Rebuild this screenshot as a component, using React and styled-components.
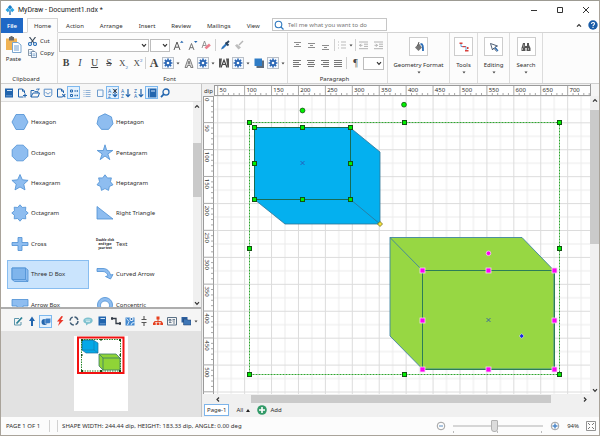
import React, { useState } from "react";
import styled, { createGlobalStyle } from "styled-components";

const GlobalStyle = createGlobalStyle`
  * {
    box-sizing: border-box;
  }
  body {
    margin: 0;
    font-family: "Noto Sans", "Open Sans", sans-serif;
    font-size: 6px;
    line-height: 8px;
    color: #2e2e2e;
    background: #fcfcfc;
  }
  button, input, select {
    font: inherit;
    color: inherit;
    margin: 0;
    padding: 0;
    border: none;
    background: none;
  }
  svg {
    display: block;
    flex: none;
  }
`;

const Window = styled.div`
  display: flex;
  flex-direction: column;
  height: 100vh;
  border: 1px solid #a9a39a;
  border-top-color: #9d9b93;
  overflow: hidden;
`;

/* ---------- title bar ---------- */

const TitleBar = styled.header`
  display: flex;
  align-items: center;
  flex: none;
  height: 17px;
  padding: 0 8px 0 4px;
  background: #fff;
`;
const Title = styled.h1`
  flex: 1;
  margin: 0 0 0 3px;
  font-family: Roboto, sans-serif;
  font-size: 7px;
  font-weight: 400;
  color: #1c1c1c;
`;
const WindowButtons = styled.div`
  display: flex;
  gap: 16px;
`;
const PlainButton = styled.button`
  display: flex;
  align-items: center;
  justify-content: center;
  white-space: nowrap;
`;

/* ---------- ribbon ---------- */

const TabBar = styled.nav`
  display: flex;
  flex: none;
  height: 15px;
  background: #fff;
  border-bottom: 1px solid #d4d4d4;
`;
const RibbonTab = styled.button`
  height: 15px;
  padding: 0 7px;
  border: 1px solid transparent;
  ${(props) =>
    props.$isActive &&
    `
      padding: 0 6px;
      background: #fcfcfc;
      border-color: #d4d4d4;
      border-bottom-color: #fcfcfc;
    `}
`;
const FileTab = styled.button`
  width: 22px;
  height: 15px;
  margin-right: 4px;
  background: #1f68c6;
  color: #fff;
  font-weight: 600;
`;
const SearchBox = styled.label`
  display: flex;
  align-items: center;
  width: 115px;
  height: 13px;
  margin-left: 4px;
  padding-left: 1px;
  border: 1px solid #c6c6c6;
  background: #fff;

  input {
    flex: 1;
    min-width: 0;
    margin-left: 4px;
    outline: none;
  }
  input::placeholder {
    color: #777;
    opacity: 1;
  }
`;
const TabBarEnd = styled.div`
  display: flex;
  align-items: center;
  gap: 6px;
  margin-left: auto;
  padding-right: 1px;
`;

const Ribbon = styled.section`
  display: flex;
  flex: none;
  height: 51px;
  background: #fcfcfc;
  border-bottom: 1px solid #cfcfcf;
`;
const Group = styled.div`
  display: flex;
  flex-direction: column;
  justify-content: space-between;
  width: ${(props) => props.$width}px;
  padding: 3px ${(props) => props.$pad || 1}px 0;
  border-right: 1px solid #dcdcdc;
`;
const GroupLabel = styled.div`
  padding-right: 6px;
  text-align: center;
`;
const ClipboardBody = styled.div`
  display: flex;
  gap: 5px;
`;
const PasteButton = styled(PlainButton)`
  flex-direction: column;
  gap: 2px;
  width: 19px;
`;
const ClipboardList = styled.div`
  display: flex;
  flex-direction: column;
  gap: 2px;
`;
const IconTextButton = styled(PlainButton)`
  justify-content: flex-start;
  gap: 3px;
  height: 10px;
`;
const ToolRow = styled.div`
  display: flex;
  align-items: center;
  height: 18px;
`;
const ToolButton = styled(PlainButton)`
  width: ${(props) => props.$width || 14}px;
  height: 14px;
`;
const Separator = styled.span`
  width: 1px;
  height: 12px;
  margin: 0 ${(props) => props.$space || 0}px;
  background: #d0d0d0;
`;
const SelectWrap = styled.span`
  display: block;
  position: relative;
  width: ${(props) => props.$width}px;
  height: 13px;
  margin-right: 1px;

  select {
    width: 100%;
    height: 100%;
    appearance: none;
    background: #fff;
    border: 1px solid #bdbdbd;
  }
  svg {
    position: absolute;
    right: 2px;
    top: 4px;
    pointer-events: none;
  }
`;
const Glyph = styled.span`
  font-family: "Liberation Serif", serif;
  font-size: ${(props) => props.$size || 10}px;
  line-height: 12px;
  color: #444;
  font-weight: ${(props) => (props.$bold ? 700 : 400)};
  font-style: ${(props) => (props.$italic ? "italic" : "normal")};
  text-decoration: ${(props) => props.$line || "none"};

  small {
    font-size: 5px;
    line-height: 1px;
    color: #2b67b5;
    vertical-align: ${(props) => (props.$sup ? "super" : "sub")};
  }
`;
const BigButton = styled.button`
  display: flex;
  flex-direction: column;
  align-items: center;
  width: ${(props) => props.$width}px;
  padding-top: 4px;
  border-right: 1px solid #dcdcdc;
  white-space: nowrap;
`;
const BigIcon = styled.span`
  display: flex;
  align-items: center;
  justify-content: center;
  width: 19px;
  height: 19px;
  margin-bottom: 5px;
  background: #fff;
  border: 1px solid #cdcdcd;

  & ~ svg {
    margin-top: 2px;
  }
`;

/* ---------- work area ---------- */

const Work = styled.main`
  display: flex;
  flex: 1;
  min-height: 0;
`;
const Side = styled.aside`
  display: flex;
  flex-direction: column;
  width: 200px;
  flex: none;
`;
const SideBar = styled.div`
  display: flex;
  align-items: center;
  flex: none;
  height: 18px;
  padding-left: 1px;
  background: #f7f7f7;
  border-bottom: 1px solid #dedede;
`;
const SideTool = styled(PlainButton)`
  width: 13px;
  height: 13px;
  border: 1px solid ${(props) => (props.$isOn ? "#7db8ee" : "transparent")};
  background: ${(props) => (props.$isOn ? "#e4f1fd" : "none")};
`;
const Library = styled.div`
  display: flex;
  flex: 1;
  min-height: 0;
  overflow: hidden;
  background: #fff;
  border-bottom: 2px solid #adadad;
`;
const ShapeGrid = styled.div`
  display: grid;
  grid-template-columns: 82px 82px;
  grid-template-rows: repeat(7, 1fr);
  gap: 2px 3px;
  flex: 1;
  height: 211px;
  margin: 6px 0 0 6px;
`;
const Shape = styled.button`
  display: flex;
  align-items: center;
  gap: 2px;
  padding-left: 3px;
  border: 1px solid ${(props) => (props.$isSelected ? "#88bdf0" : "transparent")};
  background: ${(props) => (props.$isSelected ? "#cae4fd" : "none")};
  text-align: left;
`;
const ShapeText = styled.span`
  width: 18px;
  font-size: 3px;
  font-weight: 700;
  line-height: 4px;
  text-align: center;
  color: #222;
  white-space: nowrap;
`;
const VScroll = styled.div`
  display: flex;
  flex-direction: column;
  align-items: center;
  flex: none;
  width: ${(props) => props.$width}px;
  background: #f0f0f0;
`;
const ScrollButton = styled(PlainButton)`
  width: 8px;
  height: 8px;
  flex: none;
`;
const VThumb = styled.div`
  width: 100%;
  flex: ${(props) => props.$size};
  background: #cacaca;
`;
const Space = styled.div`
  flex: ${(props) => props.$size};
`;
const Categories = styled.div`
  display: flex;
  align-items: center;
  justify-content: space-between;
  flex: none;
  height: 22px;
  padding: 2px 3px 0 10px;
  background: #f5f5f5;
`;
const Preview = styled.div`
  display: flex;
  justify-content: center;
  flex: none;
  height: 86px;
  padding-top: 5px;
  background: #e2e2e2;
`;
const PreviewPage = styled.div`
  width: 54px;
  height: 75px;
  background: #fff;
`;
const Splitter = styled.div`
  width: 2px;
  flex: none;
  background: #f0f0f0;
  border-left: 1px solid #c4c4c4;
`;

const Editor = styled.section`
  display: flex;
  flex-direction: column;
  flex: 1;
  min-width: 0;
  background: #f0f0f0;
`;
const CanvasGrid = styled.div`
  display: grid;
  grid-template-columns: 11px 1fr 9px;
  grid-template-rows: 12px 1fr;
  flex: 1;
  min-height: 0;

  > svg {
    width: 100%;
    height: 100%;
    min-width: 0;
    min-height: 0;
    overflow: hidden;
  }
`;
const Unit = styled.div`
  padding: 3px 0 0 1px;
`;
const Corner = styled.div`
  background: #f5f5f5;
  border-left: 1px solid #9a9a9a;
`;
const HScroll = styled.div`
  display: flex;
  align-items: center;
  flex: none;
  height: 9px;
  padding: 1px 10px 0 11px;
`;
const HThumb = styled.div`
  flex: ${(props) => props.$size};
  height: 8px;
  background: #cacaca;
`;
const PageBar = styled.div`
  display: flex;
  align-items: center;
  flex: none;
  gap: 7px;
  height: 14px;
  padding-left: 1px;
`;
const PageTab = styled.button`
  height: 12px;
  padding: 0 2px;
  background: #fff;
  border: 1px solid #7db4ea;
`;
const PageAction = styled(PlainButton)`
  gap: 3px;
`;

const StatusBar = styled.footer`
  display: flex;
  align-items: center;
  flex: none;
  height: 18px;
  padding: 0 3px 0 5px;
  background: #fcfcfc;
`;
const StatusItem = styled.span`
  height: 12px;
  padding: 2px 4px;
  border-left: 1px solid #d2d2d2;
  white-space: nowrap;
`;
const PageCount = styled(StatusItem)`
  margin-right: 7px;
  padding: 2px 9px 2px 0;
  border-left: none;
  border-right: 1px solid #d2d2d2;
`;
const Zoom = styled.div`
  display: flex;
  align-items: center;
  gap: 7px;
  margin-left: auto;
`;
const ZoomSlider = styled.input`
  appearance: none;
  width: 90px;
  height: 14px;
  background: linear-gradient(#d6d6d6, #d6d6d6) 0 6px / 100% 2px no-repeat,
    linear-gradient(90deg, #bbb 1px, transparent 1px) 0 12px / 44px 2px repeat-x;

  &::-webkit-slider-thumb {
    appearance: none;
    width: 7px;
    height: 12px;
    background: #dcdcdc;
    border: 1px solid #b2b2b2;
    border-radius: 1px 1px 3px 3px;
  }
`;

/* ---------- icons ---------- */

const Icon = ({ size = 10, w, h, box, children }) => (
  <svg
    width={w || size}
    height={h || size}
    viewBox={box || `0 0 ${w || size} ${h || size}`}
    fill="none"
    aria-hidden="true"
  >
    {children}
  </svg>
);

const Caret = () => (
  <Icon w={4} h={3}>
    <path d="M0.5 0.5h3L2 2.5z" fill="#444" />
  </Icon>
);
const Chevron = ({ d = "M1 1.2 3 3.4 5 1.2" }) => (
  <Icon w={6} h={5}>
    <path d={d} stroke="#333" strokeWidth="1.2" />
  </Icon>
);
const Gear = () => (
  <Icon size={12}>
    <rect x="0.5" y="0.5" width="11" height="11" fill="#f2f7fd" stroke="#b9bfc7" />
    <path
      d="M6 1.6v8.8M1.6 6h8.8M2.9 2.9l6.2 6.2M9.1 2.9 2.9 9.1"
      stroke="#2a66b4"
      strokeWidth="1.6"
    />
    <circle cx="6" cy="6" r="3" fill="#2a66b4" />
    <circle cx="6" cy="6" r="1.3" fill="#fff" />
  </Icon>
);
const Bars = ({ rows, color = "#8d8d8d" }) => (
  <Icon size={9}>
    {rows.map(([x, y, w]) => (
      <rect key={y} x={x} y={y} width={w} height="1" fill={color} />
    ))}
  </Icon>
);

const blue = "#2265ae";

const SortArt = ({ top, bottom, cross }) => (
  <>
    <text x="0" y="4.6" fontSize="5" fill={blue}>{top}</text>
    <text x="0" y="9.6" fontSize="5" fill={blue}>{bottom}</text>
    <path d="M7 1v7.5M4.8 6.3 7 8.7l2.2-2.4" stroke={blue} strokeWidth="1.2" />
    {cross && <path d="m4.8 1 4.4 4M9.2 1 4.8 5" stroke="#333" strokeWidth="0.9" />}
  </>
);

const sideTools = [
  { id: "library", icon: <><path d="M1 .5h8v9H1z" fill={blue} /><path d="M3 2.5h5" stroke="#cfe2f5" /><path d="M2 7.8h6" stroke="#7fa9d6" strokeWidth="0.8" /></> },
  { id: "new", icon: <><path d="M6.5 9h-5V1h4l2 2v2M5.5 1v2.2h2" stroke={blue} /><path d="M8 5.5v4M6 7.5h4" stroke={blue} strokeWidth="1.2" /></> },
  { id: "open", icon: <><path d="M1 9V2.5h3l1 1.2h3V5M1 9l2-4h6.5L8 9z" stroke={blue} /><path d="M6 1.8c1-1.2 2-1 3 0V.2M9 2H7.6" stroke={blue} strokeWidth="0.8" /></> },
  { id: "save", icon: <><path d="M1.2 1.2h7.6v5.6L7.5 8.5h-5L1.2 6.8z" stroke="#5b8fc8" /><path d="M2.8 4c1 2.4 3.4 2.4 4.4 0" stroke="#5b8fc8" /></> },
  { id: "close", icon: <><path d="M6 9H1.5V1h4l2 2v2M5.5 1v2.2h2" stroke={blue} /><path d="m6.3 6.2 3 3m0-3-3 3" stroke={blue} strokeWidth="1.1" /></> },
  { id: "icons", isOn: true, icon: <><path d="M1.5 2h2v2h-2zM1.5 6.5h2v2h-2z" stroke={blue} /><path d="M5.5 3h1.2M7.6 3H9M5.5 7.5h1.2M7.6 7.5H9" stroke={blue} strokeWidth="1.4" /></> },
  { id: "list", icon: <path d="M1.5 2.5h1M3.5 2.5h5M1.5 4.5h1M3.5 4.5h5M1.5 6.5h1M3.5 6.5h5M1.5 8.5h1M3.5 8.5h5" stroke="#86aad2" strokeWidth="0.9" /> },
  { id: "tiles", icon: <path d="M2.5 2H8v6.5H2.5z" stroke="#6f9ccc" fill="#f4f8fd" /> },
  { id: "unsorted", isOn: true, icon: <SortArt top="A" bottom="Z" cross /> },
  { id: "ascending", icon: <SortArt top="A" bottom="Z" /> },
  { id: "descending", icon: <SortArt top="Z" bottom="A" /> },
  { id: "book", isOn: true, icon: <><path d="M1 .5h8.5v9H1z" fill={blue} /><path d="M2.4.5v9" stroke="#b9d2ec" strokeWidth="0.7" /><path d="M4 2h4v2H4z" fill="#7aa5d5" /></> },
  { id: "find", icon: <><circle cx="6" cy="4" r="3" stroke={blue} strokeWidth="1.3" /><path d="M3.8 6.2 1 9.2" stroke={blue} strokeWidth="1.7" /></> },
];

// corners of a regular polygon, or of a star when an inner radius is given
const corners = (count, outer, inner, turn = 0) => {
  const total = inner ? count * 2 : count;
  const list = [];
  for (let i = 0; i < total; i++) {
    const r = inner && i % 2 ? inner : outer;
    const a = (2 * Math.PI * i) / total - Math.PI / 2 + turn;
    list.push(`${9 + r * Math.cos(a)},${9 + r * Math.sin(a)}`);
  }
  return list.join(" ");
};

const shapes = [
  { name: "Hexagon", art: <polygon points="5,1.5 13,1.5 17,9 13,16.5 5,16.5 1,9" /> },
  { name: "Heptagon", art: <polygon points={corners(7, 8.2)} /> },
  { name: "Octagon", art: <polygon points={corners(8, 8.5, 0, Math.PI / 8)} /> },
  { name: "Pentagram", art: <polygon points={corners(5, 8.2, 3)} /> },
  { name: "Hexagram", art: <polygon points={corners(5, 8.5, 4)} /> },
  { name: "Heptagram", art: <polygon points={corners(7, 8.2, 5.6)} /> },
  { name: "Octagram", art: <polygon points={corners(8, 8.2, 6)} /> },
  { name: "Right Triangle", art: <polygon points="1,2.5 1,15 17,15" /> },
  { name: "Cross", art: <path d="M7 2.5h4v5h6v3h-6v5H7v-5H1v-3h6z" /> },
  { name: "Text", text: true },
  {
    name: "Three D Box",
    art: (
      <>
        <path d="M1 3h13.5L17 5v11.5H3.5L1 14.5z" />
        <path d="M1 3h13.5v11.5H1zM14.5 14.5l2.5 2" fill="#7fb5ec" />
      </>
    ),
  },
  { name: "Curved Arrow", art: <path d="M1 3.5h6c4 0 6.5 2.5 7.5 6.5l2.5-.5-2.5 4.5-5-2.5 2.5-.7C11.5 8.5 9.5 6.5 7 6.5H1z" /> },
  { name: "Arrow Box", art: <path d="M1 3.5h16V10h-5v2h2.5L9 16l-5.5-4H6v-2H1z" /> },
  { name: "Concentric", art: <path fillRule="evenodd" d="M9 1.5a7.5 7.5 0 1 0 .01 0zM9 5a4.5 4.5 0 1 1-.01 0z" /> },
];

const categories = [
  { id: "sketch", icon: <><path d="M8 6v3H1.5V2.5H6" stroke="#5e97ad" /><path d="M3.5 7.5 9 1.5" stroke="#2d8296" strokeWidth="1.8" /></> },
  { id: "arrows", icon: <path d="M5 .5 8 5H6v5H4V5H2z" fill={blue} /> },
  { id: "basic", isOn: true, icon: <><circle cx="3.5" cy="6" r="3" fill={blue} /><path d="M4 3.5 5.2 2.3h4.5v4L8.3 7.5H4z" fill="#3b7cc4" stroke="#fff" strokeWidth="0.4" /></> },
  { id: "electric", icon: <path d="M6.5 0 2 5.5h2.5L3 10l5.5-6H5.8L8 .5z" fill="#e9382a" /> },
  { id: "cycle", icon: <circle cx="5" cy="5" r="4" stroke="#456079" strokeWidth="1.4" strokeDasharray="4.5 1.8" /> },
  { id: "callouts", icon: <><path d="M5 1.5c3 0 4.7 1.3 4.7 3S8 7.8 5.5 7.8L3 9.5v-2C1.3 7 .3 6 .3 4.7.3 2.8 2.2 1.5 5 1.5z" fill="#7fc1cf" /><path d="M2.5 4h5M3 5.6h4" stroke="#e8f6f8" strokeWidth="0.8" /></> },
  { id: "calculator", icon: <><path d="M1.5.5H9v9H1.5z" fill={blue} /><path d="M3.5 2.5H8" stroke="#cfe2f5" /><path d="M3 7.8h5.5" stroke="#8db4de" strokeWidth="0.7" /></> },
  { id: "connectors", icon: <><path d="M1 2.5h4v5h4.5" stroke="#333b46" strokeWidth="1.3" /><path d="M0 1.2h2v2.6H0zM8 6.2h2v2.6H8z" fill="#333b46" /></> },
  { id: "maps", icon: <><path d="M.5 1.5h9v8h-9z" fill="#4288cf" /><path d="M1.5 2.5 4 5.5 2.5 9M6 9l1-2 2.5-.5" stroke="#d9ebfb" /><circle cx="6.5" cy="3" r="2" fill="#fff" /><circle cx="6.5" cy="3" r="1" fill={blue} /></> },
  { id: "circuit", icon: <path d="M5 0v3M5 7v3M2.5 3.5h5M2.5 6.5h5" stroke="#555" strokeWidth="1.1" /> },
  { id: "orgchart", icon: <><path d="M5 3v2.5M1.5 7V5.5h7V7" stroke="#e04a2b" /><path d="M3.5.5h3v3h-3zM0 6.5h2.7V9H0zM3.7 6.5h2.7V9H3.7zM7.3 6.5H10V9H7.3z" fill="#e8401f" /></> },
  { id: "contacts", icon: <><path d="M.5 1.5h9V9h-9z" stroke="#5b7186" /><path d="M2 3.5h2V5H2zM2 6.5h2.5M5.5 3.5H8M5.5 5H8M6 7h2" stroke="#4b627a" strokeWidth="0.8" /></> },
  { id: "more", icon: <><path d="M.5 1h6v5.5h-6z" fill="#2c5f9f" /><path d="M2.5 3h3l1 1H10v5H2.5z" fill="#3f76b6" stroke="#1d3f6b" strokeWidth="0.5" /></> },
];

/* ---------- drawing ---------- */

// on-screen length of 50 dip
const STEP = 26.92;
const count = (n) => Array.from({ length: n }, (_, i) => i);

const TopRuler = () => (
  <svg>
    <rect x="0" y="1" width="100%" height="11" fill="#fff" />
    <path d="M0 1.5h4000M0 11.5h4000M.5 1v11" stroke="#9a9a9a" />
    {count(80).map((i) => {
      const x = 3.7 + i * STEP;
      return (
        <g key={i} stroke="#a8a8a8">
          <path d={`M${x} 2v9`} />
          <path d={[1, 2, 3, 4].map((n) => `M${x + (n * STEP) / 5} 9v2`).join("")} />
        </g>
      );
    })}
    {count(14).map((i) => (
      <text key={i} x={5.5 + i * STEP} y="8" fill="#2e2e2e">{50 + i * 50}</text>
    ))}
  </svg>
);

const SideRuler = () => (
  <svg>
    <rect width="10" height="100%" fill="#fff" />
    <path d="M.5 0v4000M10.5 0v4000M0 .5h11" stroke="#9a9a9a" />
    {count(80).map((i) => {
      const y = -0.3 + i * STEP;
      return (
        <g key={i} stroke="#a8a8a8">
          <path d={`M0 ${y}h11`} />
          <path d={[1, 2, 3, 4].map((n) => `M8 ${y + (n * STEP) / 5}h2`).join("")} />
        </g>
      );
    })}
    {count(11).map((i) => (
      <text key={i} transform={`translate(2 ${2 + i * STEP}) rotate(90)`} fill="#2e2e2e">
        {i * 50}
      </text>
    ))}
  </svg>
);

const Handle = ({ x, y }) => (
  <rect x={x - 2} y={y - 2} width="4" height="4" fill="#00f000" stroke="#145214" />
);
const PinkHandle = ({ x, y }) => (
  <rect x={x - 2.5} y={y - 2.5} width="5" height="5" fill="#ff00f5" stroke="#f3d4f3" strokeWidth="0.8" />
);
const Center = ({ x, y }) => (
  <path d={`M${x - 2} ${y - 2}l4 4m0-4-4 4`} stroke="#2b4fae" strokeWidth="0.8" />
);

// the eight handle spots round a box
const around = (xs, ys) =>
  ys.flatMap((y, row) => xs.filter((_, col) => row !== 1 || col !== 1).map((x) => [x, y]));

const Drawing = () => (
  <svg fill="none">
    <defs>
      <pattern id="grid" x="3.2" y="-0.6" width={STEP} height={STEP} patternUnits="userSpaceOnUse">
        <path d={`M${STEP / 2 + 0.5} 0v27M0 ${STEP / 2 + 0.5}h27`} stroke="#ececec" />
        <path d="M.5 0v27M0 .5h27" stroke="#dcdcdc" />
      </pattern>
    </defs>
    <rect width="100%" height="100%" fill="#fff" />
    <rect width="100%" height="100%" fill="url(#grid)" />

    <g stroke="#2f7396" strokeWidth="0.8">
      <path d="M40.5 31.5H136L166 56v72H71l-30.5-24.5z" fill="#04b0ef" />
      <path d="m136.5 103.5 29.5 24.5" />
      <path d="M40.5 31.5h96v72h-96z" stroke="#176b55" strokeWidth="1" />
    </g>
    <g stroke="#3f83a0" strokeWidth="0.9">
      <path d="M176 141.5h132l32 33V273H208.5L176 240z" fill="#97d743" />
      <path d="m176 141.5 32.5 33" />
      <path d="M208.5 174.5h132v99h-132z" stroke="#2c7d58" strokeWidth="1" />
    </g>

    <path d="M35.5 26.5h310v252h-310z" stroke="#2fa52f" strokeDasharray="2 1" />
    {around([35.5, 190.5, 345.5], [26.5, 152.5, 278.5]).map(([x, y]) => (
      <Handle key={`${x}-${y}`} x={x} y={y} />
    ))}
    {around([40.5, 88.5, 136.5], [31.5, 67.5, 103.5]).map(([x, y]) => (
      <Handle key={`${x}-${y}`} x={x} y={y} />
    ))}
    {around([208.5, 274.5, 340.5], [174.5, 224.5, 273.5]).map(([x, y]) => (
      <PinkHandle key={`${x}-${y}`} x={x} y={y} />
    ))}
    <g strokeWidth="0.8">
      <circle cx="88.5" cy="14.5" r="2.4" fill="#00f000" stroke="#145214" />
      <circle cx="190" cy="8.7" r="2.4" fill="#00f000" stroke="#145214" />
      <circle cx="274.5" cy="157.3" r="2.3" fill="#ff00f5" stroke="#f3d4f3" />
      <path d="m166 125.5 2.5 2.5-2.5 2.5-2.5-2.5z" fill="#f7e33a" stroke="#6f6a1c" />
      <path d="m307.7 237.5 2.5 2.5-2.5 2.5-2.5-2.5z" fill="#1a22e8" stroke="#c9e6c9" />
    </g>
    <Center x={88.5} y={67} />
    <Center x={274.5} y={224} />
  </svg>
);

const Thumbnail = () => (
  <svg width="54" height="75" viewBox="0 0 54 75" fill="none">
    <path d="M8 4h11l5 3v10H12l-4-3z" fill="#04a8e8" stroke="#1f719c" strokeWidth="0.7" />
    <path d="M8 4h12v10H8zM20 14l4 3" stroke="#1f719c" strokeWidth="0.5" />
    <path d="M25 18h17l4 4v12H29l-4-4z" fill="#8fd437" stroke="#3a7a6a" strokeWidth="0.8" />
    <path d="m25 18 4 4h17M29 22v12" stroke="#3a7a6a" strokeWidth="0.8" />
    <path d="M7.5 3.5h39V35h-39z" stroke="#27862a" strokeDasharray="1.5 1" />
    <path
      d="M7 3h2v2H7zM26 3h2v1.5h-2zM45 3h2v2h-2zM7 18h1.5v2H7zM45.5 18H47v2h-1.5zM7 34h2v2H7zM26 34h2v2h-2zM45 34h2v2h-2z"
      fill="#174d17"
    />
    <path d="M4 1.5h45.5V37H4z" stroke="#f21212" strokeWidth="2" />
  </svg>
);

const Effect = ({ name, children }) => (
  <>
    <ToolButton $width={16} aria-label={name}>{children}</ToolButton>
    <ToolButton $width={12} aria-label={`${name} settings`}><Gear /></ToolButton>
    <ToolButton $width={7} aria-label={`${name} menu`}><Caret /></ToolButton>
  </>
);

const App = () => {
  const [activeTab, setActiveTab] = useState("Home");
  const [selected, setSelected] = useState("Three D Box");
  const [zoom, setZoom] = useState(94);

  return (
    <>
      <GlobalStyle />
      <Window>
        <TitleBar>
          <Icon box="0 0 8 9">
            <path d="M4 0 6 2 4 4 2 2z" fill="#1a7fc8" />
            <path d="m2 2.5 2 2-2 2-2-2zM6 2.5l2 2-2 2-2-2z" fill="#29a5e3" />
            <path d="M4 5v4" stroke="#2b6fb0" strokeWidth="1.2" />
          </Icon>
          <Title>MyDraw - Document1.ndx *</Title>
          <WindowButtons>
            <PlainButton aria-label="Minimize">
              <Icon><path d="M2 5.5h6" stroke="#333" /></Icon>
            </PlainButton>
            <PlainButton aria-label="Maximize">
              <Icon><path d="M2.5 2.5h5v5h-5z" stroke="#333" /></Icon>
            </PlainButton>
            <PlainButton aria-label="Close">
              <Icon><path d="m2 2 6 6m0-6L2 8" stroke="#333" /></Icon>
            </PlainButton>
          </WindowButtons>
        </TitleBar>

        <TabBar>
          <FileTab>File</FileTab>
          {["Home", "Action", "Arrange", "Insert", "Review", "Mailings", "View"].map((tab) => (
            <RibbonTab key={tab} $isActive={tab === activeTab} onClick={() => setActiveTab(tab)}>
              {tab}
            </RibbonTab>
          ))}
          <SearchBox>
            <Icon>
              <circle cx="4.5" cy="4.5" r="3.3" stroke="#2f78bf" strokeWidth="1.1" />
              <path d="m7 7 2.5 2.5" stroke="#2f78bf" strokeWidth="1.3" />
            </Icon>
            <input placeholder="Tell me what you want to do" aria-label="Tell me what you want to do" />
          </SearchBox>
          <TabBarEnd>
            <PlainButton aria-label="Collapse ribbon">
              <Chevron d="M1 3.6 3 1.5l2 2.1" />
            </PlainButton>
            <PlainButton aria-label="Help">
              <Icon>
                <circle cx="5" cy="5" r="4.7" fill="#1a5da8" />
                <path d="M3.5 4c0-2 3-2 3-.2C6.5 5 5 4.8 5 6.2M5 7v1" stroke="#fff" strokeWidth="1.1" />
              </Icon>
            </PlainButton>
          </TabBarEnd>
        </TabBar>

        <Ribbon>
          <Group $width={57} $pad={3}>
            <ClipboardBody>
              <PasteButton>
                <Icon size={17}>
                  <path d="M1 2.5h11V14H1z" fill="#f0b354" />
                  <path d="M4 1h5v3.5H4zM5.5 0h2v2h-2z" fill="#6c6c6c" />
                  <path d="M7.5 6.5H13L16 9v7.5H7.5z" fill="#fff" stroke="#7ba6cf" />
                  <path d="M9 10h5M9 12h5M9 14h5" stroke="#5d93cb" strokeWidth="0.9" />
                </Icon>
                Paste
              </PasteButton>
              <ClipboardList>
                <IconTextButton>
                  <Icon size={9}>
                    <path d="m1.5 0 4.5 6M7.5 0 3 6" stroke="#3d4c5c" strokeWidth="1.2" />
                    <circle cx="2" cy="7" r="1.5" stroke="#2a70b9" strokeWidth="1.1" />
                    <circle cx="7" cy="7" r="1.5" stroke="#2a70b9" strokeWidth="1.1" />
                  </Icon>
                  Cut
                </IconTextButton>
                <IconTextButton>
                  <Icon size={9}>
                    <path d="M.5.5H4L5.5 2v4.5h-5z" fill="#fff" stroke="#6c7f93" strokeWidth="0.8" />
                    <path d="M3.5 2.5H7L8.5 4v4.5h-5z" fill="#fff" stroke="#5a7a9c" strokeWidth="0.8" />
                    <path d="M4.5 5h3M4.5 6.7h3M1.5 3H3M1.5 4.5H3" stroke="#4d88c4" strokeWidth="0.7" />
                  </Icon>
                  Copy
                </IconTextButton>
              </ClipboardList>
            </ClipboardBody>
            <GroupLabel>Clipboard</GroupLabel>
          </Group>

          <Group $width={230}>
            <div>
              <ToolRow>
                <SelectWrap $width={90}>
                  <select aria-label="Font family" />
                  <Chevron />
                </SelectWrap>
                <SelectWrap $width={20}>
                  <select aria-label="Font size" />
                  <Chevron />
                </SelectWrap>
                <ToolButton aria-label="Grow font">
                  <Icon size={11}>
                    <path d="m1 10 3-8 3 8M2.2 7.2h3.6" stroke="#555" />
                    <path d="M7 2.8h3.5L8.8.8z" fill={blue} />
                  </Icon>
                </ToolButton>
                <ToolButton aria-label="Shrink font">
                  <Icon size={11}>
                    <path d="m2 10 2.5-6.5L7 10M3 7.7h3" stroke="#666" strokeWidth="0.9" />
                    <path d="M7 1h3.5L8.8 3z" fill={blue} />
                  </Icon>
                </ToolButton>
                <ToolButton aria-label="Clear formatting">
                  <Icon>
                    <path d="m1 8 2.5-7L6 8M1.8 5.5h3" stroke="#888" strokeWidth="0.9" />
                    <path d="m3.5 7.5 4.5-4 1.8 2-4.3 3.8z" fill="#ea7f8d" />
                  </Icon>
                </ToolButton>
                <Separator $space={2} />
                <ToolButton aria-label="Pick format">
                  <Icon>
                    <path d="M1 9.5 2 7l4-4 1.5 1.5-4 4z" fill="#2f75bc" />
                    <path d="m5.5 2.5 3 3M6.5 3.5 9 1" stroke="#2b4460" strokeWidth="1.8" />
                  </Icon>
                </ToolButton>
                <ToolButton aria-label="Format painter">
                  <Icon>
                    <path d="m5 5 4-4" stroke="#b5b5b5" strokeWidth="1.5" />
                    <path d="M1 5.5 3 4l4 3.5-2.5 2z" fill="#bdbdbd" />
                  </Icon>
                </ToolButton>
              </ToolRow>
              <ToolRow>
                <ToolButton><Glyph $bold>B</Glyph></ToolButton>
                <ToolButton><Glyph $italic>I</Glyph></ToolButton>
                <ToolButton $width={15}><Glyph $line="underline">U</Glyph></ToolButton>
                <ToolButton><Glyph $line="line-through">S</Glyph></ToolButton>
                <ToolButton $width={15}><Glyph $size={9}>X<small>2</small></Glyph></ToolButton>
                <ToolButton><Glyph $size={9} $sup>X<small>2</small></Glyph></ToolButton>
                <Separator />
                <Effect name="Fill">
                  <Glyph $bold $size={12}>A</Glyph>
                </Effect>
                <Effect name="Stroke">
                  <Icon>
                    <path d="M1 9.5 4 1h2l3 8.5H6.8l-.5-2H3.7l-.5 2zM4.2 5.8h1.6L5 3z" stroke="#666" strokeWidth="0.8" fill="#ddd" />
                  </Icon>
                </Effect>
                <Effect name="Shadow">
                  <Icon>
                    <path d="M0 .5h3l-1.5 9H0zM7 .5h3v9H8.5z" fill="#555" />
                    <path d="m2 9.5 3-7.5 3 7.5M3.3 6.5h3.4" stroke="#444" strokeWidth="1.2" />
                  </Icon>
                </Effect>
                <Effect name="Layers">
                  <Icon>
                    <path d="M2.5 2.5H10V10H2.5z" fill="#5c6b7c" />
                    <path d="M.5.5H8V8H.5z" fill="#2f7cc6" />
                  </Icon>
                </Effect>
              </ToolRow>
            </div>
            <GroupLabel>Font</GroupLabel>
          </Group>

          <Group $width={100} $pad={2}>
            <div>
              <ToolRow>
                <ToolButton aria-label="Top"><Bars rows={[[1, 1, 7], [3, 3, 3], [1, 5, 7]]} /></ToolButton>
                <ToolButton aria-label="Middle"><Bars rows={[[1, 2, 7], [3, 4, 3], [1, 6, 7]]} /></ToolButton>
                <ToolButton aria-label="Bottom"><Bars rows={[[1, 4, 7], [3, 6, 3], [1, 8, 7]]} /></ToolButton>
                <Separator $space={2} />
                <ToolButton $width={10} aria-label="Bullets">
                  <Icon size={8}>
                    <path d="M0 1h1M3 1h5M0 4h1M3 4h5M0 7h1M3 7h5" stroke="#bbb" />
                  </Icon>
                </ToolButton>
                <ToolButton $width={8} aria-label="Bullet styles"><Caret /></ToolButton>
                <Separator />
                <ToolButton $width={15} aria-label="Decrease indent">
                  <Icon size={9}>
                    <path d="M0 1h9M5 3.2h4M5 5.4h4M0 7.7h9M3.5 4.3h-3M2 2.8.5 4.3 2 5.8" stroke="#a9a9a9" strokeWidth="0.9" />
                  </Icon>
                </ToolButton>
                <ToolButton aria-label="Increase indent">
                  <Icon size={9}>
                    <path d="M0 1h9M5 3.2h4M5 5.4h4M0 7.7h9M.5 4.3h3M2 2.8l1.5 1.5L2 5.8" stroke="#a9a9a9" strokeWidth="0.9" />
                  </Icon>
                </ToolButton>
              </ToolRow>
              <ToolRow>
                <ToolButton aria-label="Left"><Bars color="#777" rows={[[1, 1, 8], [1, 3, 6], [1, 5, 8], [1, 7, 6]]} /></ToolButton>
                <ToolButton aria-label="Center"><Bars color="#777" rows={[[1, 1, 8], [2, 3, 6], [1, 5, 8], [2, 7, 6]]} /></ToolButton>
                <ToolButton aria-label="Right"><Bars color="#777" rows={[[1, 1, 8], [3, 3, 6], [1, 5, 8], [3, 7, 6]]} /></ToolButton>
                <ToolButton aria-label="Justify"><Bars color="#777" rows={[[1, 1, 8], [1, 3, 8], [1, 5, 8], [1, 7, 8]]} /></ToolButton>
                <Separator $space={1} />
                <ToolButton $width={16}><Glyph>¶</Glyph></ToolButton>
                <SelectWrap $width={21}>
                  <select aria-label="Spacing" />
                  <Chevron />
                </SelectWrap>
              </ToolRow>
            </div>
            <GroupLabel>Paragraph</GroupLabel>
          </Group>

          <BigButton $width={62}>
            <BigIcon>
              <Icon>
                <path d="m1 5.5 4-4 3 4L4.5 9z" fill="#777" />
                <path d="M3.5 4 5 0" stroke="#555" />
                <path d="M6.5 2C9 2 9 4 9 9" stroke="#2a6cb6" strokeWidth="1.8" />
              </Icon>
            </BigIcon>
            Geometry Format
            <Caret />
          </BigButton>
          <BigButton $width={28}>
            <BigIcon>
              <Icon>
                <path d="M2 2v2.5h5V8" stroke="#5b9fd6" />
                <path d="M.5.5h3V2h-3zM3.5 4h3v1.2h-3zM6 8h3.5v1.5H6zM8 5h1.5v2H8z" fill="#d9403c" />
              </Icon>
            </BigIcon>
            Tools
            <Caret />
          </BigButton>
          <BigButton $width={32}>
            <BigIcon>
              <Icon>
                <path d="m1.5 1.5 7 2.5-2.7 1.2 2.7 3.3-1 .8L4.8 6 3.5 8z" fill="#fff" stroke="#3d4f66" strokeWidth="0.9" />
                <path d="M6 5.5 9 9" stroke="#2f70b6" strokeWidth="1.2" />
              </Icon>
            </BigIcon>
            Editing
            <Caret />
          </BigButton>
          <BigButton $width={33}>
            <BigIcon>
              <Icon>
                <path d="M2 1h2v2l.5 6h-4V6zM6 1h2v2l1.5 3v3h-4L6 3zM4 4h2v2H4z" fill="#555" />
                <path d="M1.5 6v2M7.5 6v2M2.8 2.5v3" stroke="#ccc" strokeWidth="0.7" />
              </Icon>
            </BigIcon>
            Search
            <Caret />
          </BigButton>
        </Ribbon>

        <Work>
          <Side>
            <SideBar>
              {sideTools.map((tool) => (
                <SideTool key={tool.id} $isOn={tool.isOn} aria-label={tool.id}>
                  <Icon>{tool.icon}</Icon>
                </SideTool>
              ))}
            </SideBar>
            <Library>
              <ShapeGrid>
                {shapes.map((shape) => (
                  <Shape
                    key={shape.name}
                    $isSelected={shape.name === selected}
                    onClick={() => setSelected(shape.name)}
                  >
                    {shape.text ? (
                      <ShapeText>
                        Double click
                        <br />
                        and type
                        <br />
                        your text
                      </ShapeText>
                    ) : (
                      <Icon size={18}>
                        <g fill="#8ebdf0" stroke="#4d8fd3" strokeWidth="0.8">
                          {shape.art}
                        </g>
                      </Icon>
                    )}
                    {shape.name}
                  </Shape>
                ))}
              </ShapeGrid>
              <VScroll $width={8}>
                <ScrollButton aria-label="Scroll up"><Chevron d="M1 3.6 3 1.5l2 2.1" /></ScrollButton>
                <Space $size={33} />
                <VThumb $size={54} />
                <Space $size={102} />
                <ScrollButton aria-label="Scroll down"><Chevron /></ScrollButton>
              </VScroll>
            </Library>
            <Categories>
              {categories.map((item) => (
                <SideTool key={item.id} $isOn={item.isOn} aria-label={item.id}>
                  <Icon>{item.icon}</Icon>
                </SideTool>
              ))}
              <PlainButton aria-label="More categories"><Caret /></PlainButton>
            </Categories>
            <Preview>
              <PreviewPage>
                <Thumbnail />
              </PreviewPage>
            </Preview>
          </Side>
          <Splitter />

          <Editor>
            <CanvasGrid>
              <Unit>dip</Unit>
              <TopRuler />
              <Corner />
              <SideRuler />
              <Drawing />
              <VScroll $width={9}>
                <ScrollButton aria-label="Scroll up"><Chevron d="M1 3.6 3 1.5l2 2.1" /></ScrollButton>
                <Space $size={6} />
                <VThumb $size={134} />
                <Space $size={142} />
                <ScrollButton aria-label="Scroll down"><Chevron /></ScrollButton>
              </VScroll>
            </CanvasGrid>
            <HScroll>
              <ScrollButton aria-label="Scroll left"><Chevron d="m4 .5-2 2 2 2" /></ScrollButton>
              <Space $size={29} />
              <HThumb $size={299} />
              <Space $size={30} />
              <ScrollButton aria-label="Scroll right"><Chevron d="m2 .5 2 2-2 2" /></ScrollButton>
            </HScroll>
            <PageBar>
              <PageTab>Page-1</PageTab>
              <PageAction>
                All
                <Icon w={4} h={3}><path d="M0 3h4L2 0z" fill="#222" /></Icon>
              </PageAction>
              <PageAction>
                <Icon>
                  <circle cx="5" cy="5" r="4.8" fill="#329a68" />
                  <path d="M5 2v6M2 5h6" stroke="#fff" strokeWidth="1.6" />
                </Icon>
                Add
              </PageAction>
            </PageBar>
          </Editor>
        </Work>

        <StatusBar>
          <PageCount>PAGE 1 OF 1</PageCount>
          <StatusItem>SHAPE WIDTH: 244.44 dip, HEIGHT: 183.33 dip, ANGLE: 0.00 deg</StatusItem>
          <Zoom>
            <PlainButton aria-label="Zoom out">
              <Icon>
                <circle cx="5" cy="5" r="3.8" stroke="#888" strokeWidth="0.8" />
                <path d="M3 5h4" stroke="#5b8cc0" />
              </Icon>
            </PlainButton>
            <ZoomSlider
              type="range"
              aria-label="Zoom"
              min="0"
              max="204"
              value={zoom}
              onChange={(e) => setZoom(Number(e.target.value))}
            />
            <PlainButton aria-label="Zoom in">
              <Icon>
                <circle cx="5" cy="5" r="3.8" stroke="#888" strokeWidth="0.8" />
                <path d="M2.5 5h5M5 2.5v5" stroke="#4a86c8" strokeWidth="1.4" />
              </Icon>
            </PlainButton>
            <output>{zoom}%</output>
            <PlainButton aria-label="Fit page">
              <Icon>
                <path d="M.5.5h9v9h-9z" stroke="#777" strokeWidth="0.8" />
                <path d="m2 2 2 2m4-2L6 4M2 8l2-2m4 2L6 6" stroke="#777" />
              </Icon>
            </PlainButton>
          </Zoom>
        </StatusBar>
      </Window>
    </>
  );
};

export default App;
